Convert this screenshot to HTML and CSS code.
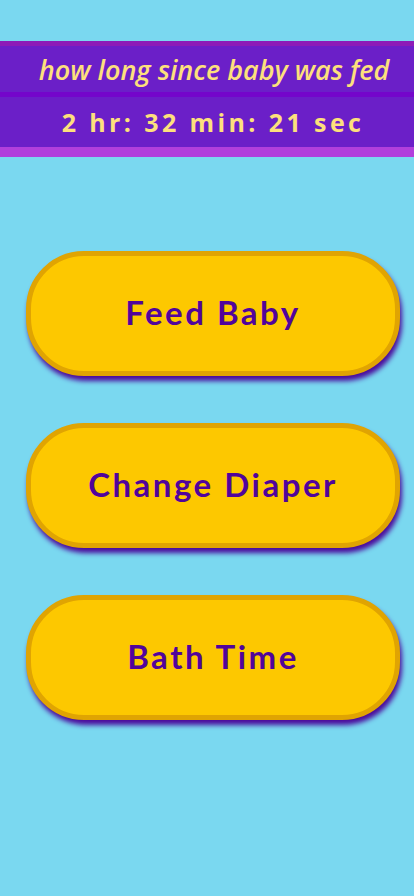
FILE: index.html
```html
<!DOCTYPE html>
<html lang="en">
<head>
<meta charset="utf-8">
<title>Baby Tracker</title>
<link rel="stylesheet" href="styles.css">
</head>
<body>
  <header class="banner">
    <div class="banner-title">how long since baby was fed</div>
    <div class="banner-divider"></div>
    <div class="banner-timer">2 hr: 32 min: 21 sec</div>
  </header>
  <main class="actions">
    <button class="action-btn" type="button">Feed Baby</button>
    <button class="action-btn" type="button">Change Diaper</button>
    <button class="action-btn" type="button">Bath Time</button>
  </main>
</body>
</html>
```
FILE: styles.css
```css
html, body {
  margin: 0;
  padding: 0;
}
body {
  background: #7ad8f0;
  min-height: 896px;
  font-family: "Open Sans", "Noto Sans", sans-serif;
}
.banner {
  margin-top: 41px;
  background: #6b1fc8;
  border-top: 5px solid #8d1bb7;
  border-bottom: 10px solid #b13fdc;
  color: #fde07c;
}
.banner-title {
  height: 46px;
  display: flex;
  align-items: center;
  justify-content: center;
  font-style: italic;
  font-weight: 600;
  font-size: 27px;
  padding-left: 14px;
}
.banner-divider {
  height: 5px;
  background: #7405cb;
}
.banner-timer {
  height: 50px;
  display: flex;
  align-items: center;
  justify-content: center;
  font-weight: 700;
  font-size: 25px;
  letter-spacing: 3.4px;
  padding-left: 12px;
}
.actions {
  display: flex;
  flex-direction: column;
  gap: 47px;
  padding: 94px 14px 0 26px;
}
.action-btn {
  height: 125px;
  box-sizing: border-box;
  border: 5px solid #e0a402;
  border-radius: 58px;
  background: #fdc800;
  color: #51049b;
  font-family: "Lato", "Noto Sans", sans-serif;
  font-weight: 700;
  font-size: 33px;
  letter-spacing: 2.5px;
  padding: 0 0 4px 0;
  box-shadow: 2px 5px 5px #4b0a9c;
  cursor: pointer;
}
```
